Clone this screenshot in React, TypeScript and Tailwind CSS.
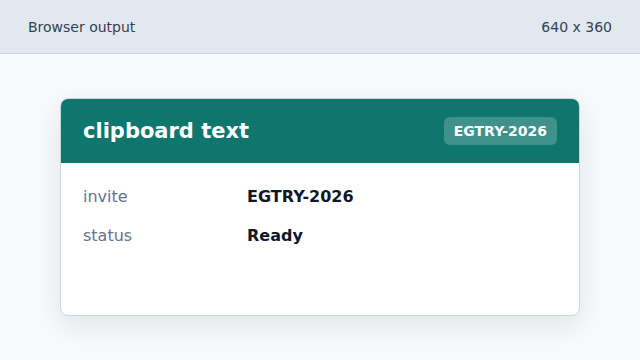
export default function App() {
  const rows = [
    { label: 'invite', value: 'EGTRY-2026' },
    { label: 'status', value: 'Ready' },
  ]

  return (
    <div className="w-[640px] h-[360px] bg-[#f8fafc] font-['DejaVu_Sans',sans-serif] overflow-hidden">
      {/* Top bar */}
      <div className="h-[54px] bg-[#e2e8f0] border-b border-[#cbd5e1] flex items-center justify-between px-7 pt-px text-[14px] text-[#334155]">
        <span>Browser output</span>
        <span>640 x 360</span>
      </div>

      {/* Card */}
      <div className="mx-auto mt-[44px] w-[520px] h-[218px] bg-white border border-[#cbd5e1] rounded-lg shadow-[0_10px_30px_rgba(15,23,42,0.1)] overflow-hidden">
        <div className="h-[64px] bg-[#0f766e] flex items-center justify-between px-[22px]">
          <h1 className="text-[21px] leading-7 font-bold text-white">clipboard text</h1>
          <span className="px-[10px] py-1 rounded-md bg-white/20 text-white text-[14px] font-bold leading-5">
            EGTRY-2026
          </span>
        </div>
        <div className="px-[22px] pt-[22px] flex flex-col gap-[15px]">
          {rows.map((r) => (
            <div key={r.label} className="grid grid-cols-[164px_1fr] text-[16px] leading-6">
              <span className="text-[#64748b]">{r.label}</span>
              <span className="font-bold text-[#0f172a]">{r.value}</span>
            </div>
          ))}
        </div>
      </div>
    </div>
  )
}
